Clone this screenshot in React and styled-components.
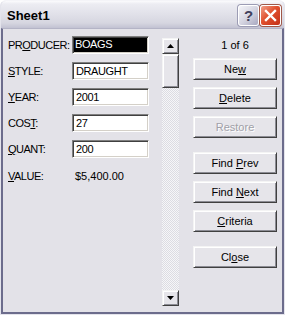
import React from 'react';
import styled, { createGlobalStyle } from 'styled-components';

const GlobalStyle = createGlobalStyle`
  body {
    margin: 0;
    background: #ffffff;
    font-family: 'Liberation Sans', Arial, sans-serif;
  }
`;

const fields = [
  { label: 'PRODUCER:', key: 'O', pre: 'PR', post: 'DUCER:', value: 'BOAGS', selected: true },
  { label: 'STYLE:', key: 'S', pre: '', post: 'TYLE:', value: 'DRAUGHT' },
  { label: 'YEAR:', key: 'Y', pre: '', post: 'EAR:', value: '2001' },
  { label: 'COST:', key: 'T', pre: 'COS', post: ':', value: '27' },
  { label: 'QUANT:', key: 'Q', pre: '', post: 'UANT:', value: '200' },
];

const buttons = [
  { pre: 'Ne', key: 'w', post: '' },
  { pre: '', key: 'D', post: 'elete' },
  { pre: 'Restore', key: '', post: '', disabled: true },
  { pre: 'Find ', key: 'P', post: 'rev', group: true },
  { pre: 'Find ', key: 'N', post: 'ext' },
  { pre: '', key: 'C', post: 'riteria' },
  { pre: 'Cl', key: 'o', post: 'se', group: true },
];

const DataForm = () => {
  return (
    <Window>
      <TitleBar>
        <Title>Sheet1</Title>
        <TitleButtons>
          <HelpButton>?</HelpButton>
          <CloseButton>
            <svg width="13" height="13" viewBox="0 0 13 13">
              <path d="M2 2 L11 11 M11 2 L2 11" stroke="#fff" strokeWidth="2.4" strokeLinecap="square" />
            </svg>
          </CloseButton>
        </TitleButtons>
      </TitleBar>
      <Body>
        <Fields>
          {fields.map((f) => (
            <React.Fragment key={f.label}>
              <Label>
                {f.pre}
                <u>{f.key}</u>
                {f.post}
              </Label>
              <TextBox>
                {f.selected ? <Selection>{f.value}</Selection> : f.value}
              </TextBox>
            </React.Fragment>
          ))}
          <Label>
            <u>V</u>ALUE:
          </Label>
          <Value>$5,400.00</Value>
        </Fields>
        <ScrollBar>
          <ScrollButton>
            <svg width="7" height="4" viewBox="0 0 7 4">
              <path d="M3.5 0 L7 4 L0 4 Z" fill="#000" />
            </svg>
          </ScrollButton>
          <Thumb />
          <Track />
          <ScrollButton>
            <svg width="7" height="4" viewBox="0 0 7 4">
              <path d="M0 0 L7 0 L3.5 4 Z" fill="#000" />
            </svg>
          </ScrollButton>
        </ScrollBar>
        <Actions>
          <Counter>1 of 6</Counter>
          {buttons.map((b, i) => (
            <Button key={i} $group={b.group} disabled={b.disabled}>
              {b.pre}
              {b.key && <u>{b.key}</u>}
              {b.post}
            </Button>
          ))}
        </Actions>
      </Body>
    </Window>
  );
};

const Window = styled.div`
  width: 285px;
  height: 315px;
  box-sizing: border-box;
  border: 1px solid #e4e4ec;
  border-top-color: #f4f4f8;
  border-radius: 6px 6px 0 0;
  display: flex;
  flex-direction: column;
  background: #d6d6e2;
  overflow: hidden;
`;

const TitleBar = styled.div`
  height: 27px;
  flex: none;
  display: flex;
  align-items: center;
  justify-content: space-between;
  padding: 0 3px 0 6px;
  background: linear-gradient(
    #fbfbfd 0px,
    #ececf2 3px,
    #e2e2ea 12px,
    #d6d6e0 22px,
    #c2c2d2 27px
  );
`;

const Title = styled.div`
  font-family: 'Liberation Sans', Arial, sans-serif;
  font-weight: bold;
  font-size: 13px;
  color: #000;
  padding-top: 1px;
`;

const TitleButtons = styled.div`
  display: flex;
  gap: 1px;
  margin-top: 1px;
`;

const TitleButtonBase = styled.div`
  width: 21px;
  height: 21px;
  box-sizing: border-box;
  border: 1px solid #fff;
  border-radius: 3px;
  display: flex;
  align-items: center;
  justify-content: center;
`;

const HelpButton = styled(TitleButtonBase)`
  background: linear-gradient(135deg, #f4f4f8 0%, #d6d6e2 50%, #a8a8c0 100%);
  box-shadow: 0 0 0 1px #9c9cb4;
  color: #40405c;
  font-weight: bold;
  font-size: 15px;
  font-family: 'Liberation Sans', Arial, sans-serif;
`;

const CloseButton = styled(TitleButtonBase)`
  background: linear-gradient(135deg, #f0a08a 0%, #e0502e 45%, #c43018 100%);
  box-shadow: 0 0 0 1px #a05848;
`;

const Body = styled.div`
  flex: 1;
  display: flex;
  align-items: flex-start;
  margin: 0 0 0 0;
  border: 2px solid #6c6c8c;
  border-top: 1px solid #b4b4c6;
  background: #e3e2e8;
  padding: 7px 4px 0 5px;
`;

const Fields = styled.div`
  width: 141px;
  display: grid;
  grid-template-columns: 64px 77px;
  grid-auto-rows: 18px;
  row-gap: 8px;
  align-items: center;
  font-size: 11px;
  color: #000;

  & > :nth-last-child(-n + 2) {
    margin-top: 1px;
  }
`;

const Label = styled.div`
  letter-spacing: -0.5px;
  white-space: nowrap;
`;

const TextBox = styled.div`
  height: 18px;
  box-sizing: border-box;
  background: #fff;
  border-top: 1px solid #7f7f7f;
  border-left: 1px solid #7f7f7f;
  border-right: 1px solid #fff;
  border-bottom: 1px solid #fff;
  box-shadow: inset 1px 1px 0 #404040, inset -1px -1px 0 #d4d0c8;
  padding: 2px 2px 0 3px;
  line-height: 13px;
  letter-spacing: -0.4px;
  white-space: nowrap;
  overflow: hidden;
`;

const Selection = styled.span`
  display: block;
  background: #000;
  color: #fff;
  margin: -1px -1px 0 -2px;
  padding-left: 1px;
  height: 14px;
`;

const Value = styled.div`
  padding-left: 3px;
`;

const ScrollBar = styled.div`
  width: 17px;
  height: 268px;
  margin: 2px 0 0 13px;
  display: flex;
  flex-direction: column;
`;

const raised = `
  box-sizing: border-box;
  background: #e6e5ea;
  border-top: 1px solid #f4f4f4;
  border-left: 1px solid #f4f4f4;
  border-right: 1px solid #404040;
  border-bottom: 1px solid #404040;
  box-shadow: inset 1px 1px 0 #ffffff, inset -1px -1px 0 #8c8c94;
`;

const ScrollButton = styled.div`
  ${raised}
  height: 16px;
  flex: none;
  display: flex;
  align-items: center;
  justify-content: center;
`;

const Thumb = styled.div`
  ${raised}
  height: 34px;
  flex: none;
`;

const Track = styled.div`
  flex: 1;
  background: repeating-conic-gradient(#f6f6f8 0 25%, #dcdce2 0 50%) 0 0 / 2px 2px;
`;

const Actions = styled.div`
  width: 84px;
  margin-left: 14px;
  display: flex;
  flex-direction: column;
`;

const Counter = styled.div`
  height: 22px;
  line-height: 19px;
  text-align: center;
  font-size: 11px;
  color: #000;
`;

const Button = styled.button`
  ${raised}
  height: 22px;
  padding: 0;
  margin-top: ${(p) => (p.$group ? '14px' : '7px')};
  font-family: 'Liberation Sans', Arial, sans-serif;
  font-size: 11px;
  color: #000;
  text-align: center;

  &:first-of-type {
    margin-top: 0;
  }

  &:disabled {
    color: #a0a0a8;
    text-shadow: 1px 1px 0 #ffffff;
  }
`;

export default function App() {
  return (
    <>
      <GlobalStyle />
      <DataForm />
    </>
  );
}
